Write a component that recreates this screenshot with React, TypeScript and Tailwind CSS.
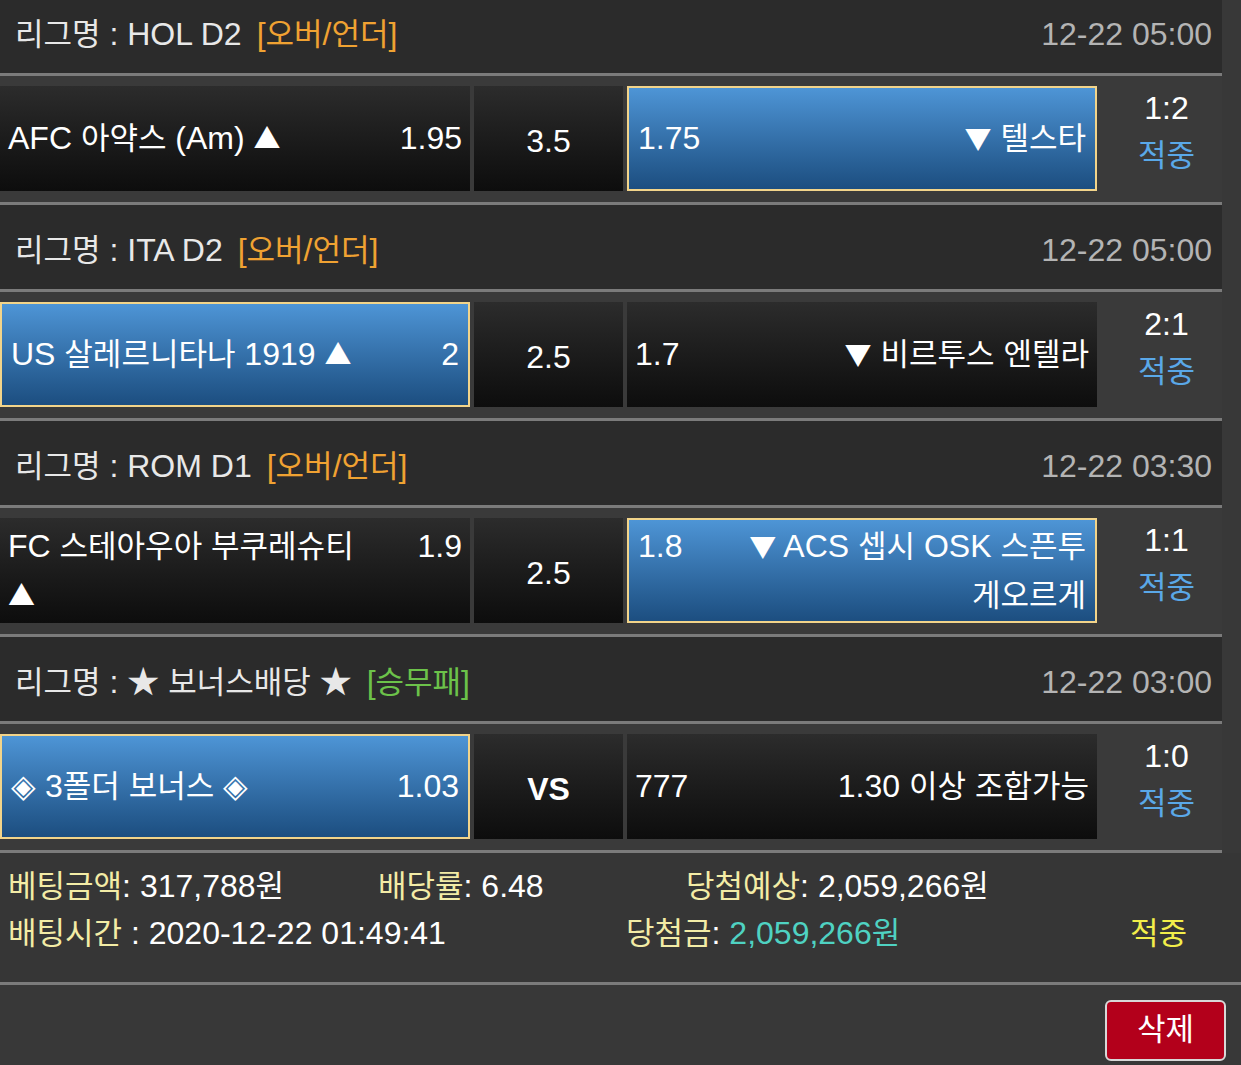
import React from "react";

type Cell = { name: string; odds: string; selected?: boolean };

type Match = {
  league: string;
  tag: string;
  tagColor: string;
  time: string;
  home: Cell;
  draw: string;
  drawBold?: boolean;
  away: Cell;
  score: string;
};

const matches: Match[] = [
  {
    league: "HOL D2",
    tag: "[오버/언더]",
    tagColor: "text-[#f0a232]",
    time: "12-22 05:00",
    home: { name: "AFC 아약스 (Am) ▲", odds: "1.95" },
    draw: "3.5",
    away: { name: "▼ 텔스타", odds: "1.75", selected: true },
    score: "1:2",
  },
  {
    league: "ITA D2",
    tag: "[오버/언더]",
    tagColor: "text-[#f0a232]",
    time: "12-22 05:00",
    home: { name: "US 살레르니타나 1919 ▲", odds: "2", selected: true },
    draw: "2.5",
    away: { name: "▼ 비르투스 엔텔라", odds: "1.7" },
    score: "2:1",
  },
  {
    league: "ROM D1",
    tag: "[오버/언더]",
    tagColor: "text-[#f0a232]",
    time: "12-22 03:30",
    home: { name: "FC 스테아우아 부쿠레슈티 ▲", odds: "1.9" },
    draw: "2.5",
    away: { name: "▼ ACS 셉시 OSK 스픈투 게오르게", odds: "1.8", selected: true },
    score: "1:1",
  },
  {
    league: "★ 보너스배당 ★",
    tag: "[승무패]",
    tagColor: "text-[#6cc24a]",
    time: "12-22 03:00",
    home: { name: "◈ 3폴더 보너스 ◈", odds: "1.03", selected: true },
    draw: "VS",
    drawBold: true,
    away: { name: "1.30 이상 조합가능", odds: "777" },
    score: "1:0",
  },
];

// hangul runs are set a little smaller than the latin text, as on the device;
// the up/down arrows come from the CJK font
function T({ t }: { t: string }) {
  return (
    <>
      {t.split(/([\uAC00-\uD7A3]+|[▲▼])/).map((s, i) => {
        if (/[▲▼]/.test(s))
          return (
            <span key={i} className="font-['Noto_Sans_CJK_KR'] text-[27px]">
              {s}
            </span>
          );
        if (/[\uAC00-\uD7A3]/.test(s))
          return (
            <span key={i} className="text-[31px]">
              {s}
            </span>
          );
        return s;
      })}
    </>
  );
}

function cellBg(selected?: boolean) {
  return selected
    ? "border-2 border-[#f2d48a] bg-gradient-to-b from-[#4e95d6] to-[#1c4e80] px-[9px]"
    : "bg-gradient-to-b from-[#2c2c2c] to-[#0d0d0d] px-[8px]";
}

function HomeCell({ cell }: { cell: Cell }) {
  return (
    <div className={`flex w-[470px] shrink-0 items-center ${cellBg(cell.selected)}`}>
      <div className="flex w-full items-baseline justify-between gap-[40px]">
        <span className="break-keep leading-[48px]">
          <T t={cell.name} />
        </span>
        <span className="shrink-0 leading-[48px]">{cell.odds}</span>
      </div>
    </div>
  );
}

function AwayCell({ cell }: { cell: Cell }) {
  return (
    <div className={`flex w-[470px] shrink-0 items-center ${cellBg(cell.selected)}`}>
      <div className="flex w-full items-baseline justify-between gap-[40px]">
        <span className="shrink-0 leading-[48px]">{cell.odds}</span>
        <span className="break-keep text-right leading-[48px]">
          <T t={cell.name} />
        </span>
      </div>
    </div>
  );
}

function MatchBlock({ m }: { m: Match }) {
  return (
    <>
      <div className="flex h-[87px] items-center justify-between border-b-[3px] border-[#7b7b7b] bg-[#2b2b2b] pl-[15px] pr-[10px] pt-[6px]">
        <div className="flex items-baseline">
          <span className="text-[#e8e8e8]">
            <T t={`리그명 : ${m.league}`} />
          </span>
          <span className={`ml-[15px] ${m.tagColor}`}>
            <T t={m.tag} />
          </span>
        </div>
        <span className="text-[#b4b4b4]">{m.time}</span>
      </div>
      <div className="flex h-[129px] gap-[4px] border-b-[3px] border-[#7b7b7b] bg-[#3a3a3a] pb-[11px] pt-[10px] text-white">
        <HomeCell cell={m.home} />
        <div className="flex w-[149px] shrink-0 items-center justify-center bg-gradient-to-b from-[#2c2c2c] to-[#0d0d0d] pt-[4px]">
          <span className={m.drawBold ? "font-bold" : ""}>{m.draw}</span>
        </div>
        <AwayCell cell={m.away} />
        <div className="flex flex-1 flex-col items-center justify-center pb-[14px] pl-[10px] leading-[47px]">
          <span>{m.score}</span>
          <span className="text-[31px] text-[#5aa8e8]">적중</span>
        </div>
      </div>
    </>
  );
}

export default function App() {
  return (
    <div
      className="h-[1065px] overflow-hidden bg-[#383838] text-[32px]"
      style={{ fontFamily: '"Liberation Sans", "Noto Sans CJK KR", sans-serif' }}
    >
      <div className="-mt-[11px] w-[1222px]">
        {matches.map((m) => (
          <MatchBlock key={m.league + m.time} m={m} />
        ))}
      </div>

      {/* betting summary */}
      <div className="border-b-[3px] border-[#7b7b7b] bg-[#363636] px-[8px] pb-[25px] pt-[10px] leading-[46px]">
        <div className="flex items-baseline">
          <div className="w-[370px]">
            <span className="text-[31px] text-[#f3eca6]">베팅금액</span>
            <span className="text-white">
              <T t=": 317,788원" />
            </span>
          </div>
          <div className="w-[308px]">
            <span className="text-[31px] text-[#f3eca6]">배당률</span>
            <span className="text-white">: 6.48</span>
          </div>
          <div>
            <span className="text-[31px] text-[#f3eca6]">당첨예상</span>
            <span className="text-white">
              <T t=": 2,059,266원" />
            </span>
          </div>
        </div>
        <div className="flex items-baseline">
          <div className="w-[618px]">
            <span className="text-[31px] text-[#f3eca6]">배팅시간</span>
            <span className="text-white"> : 2020-12-22 01:49:41</span>
          </div>
          <div className="w-[504px]">
            <span className="text-[31px] text-[#f3eca6]">당첨금</span>
            <span className="text-white">: </span>
            <span className="text-[#4fd2c2]">
              <T t="2,059,266원" />
            </span>
          </div>
          <span className="text-[31px] text-[#f2ee4a]">적중</span>
        </div>
      </div>

      <div className="flex justify-end pr-[15px] pt-[15px]">
        <button className="flex h-[61px] w-[121px] items-center justify-center rounded-[6px] border-2 border-[#d8d8d8] bg-[#b3001b] text-[31px] text-white">
          삭제
        </button>
      </div>
    </div>
  );
}
